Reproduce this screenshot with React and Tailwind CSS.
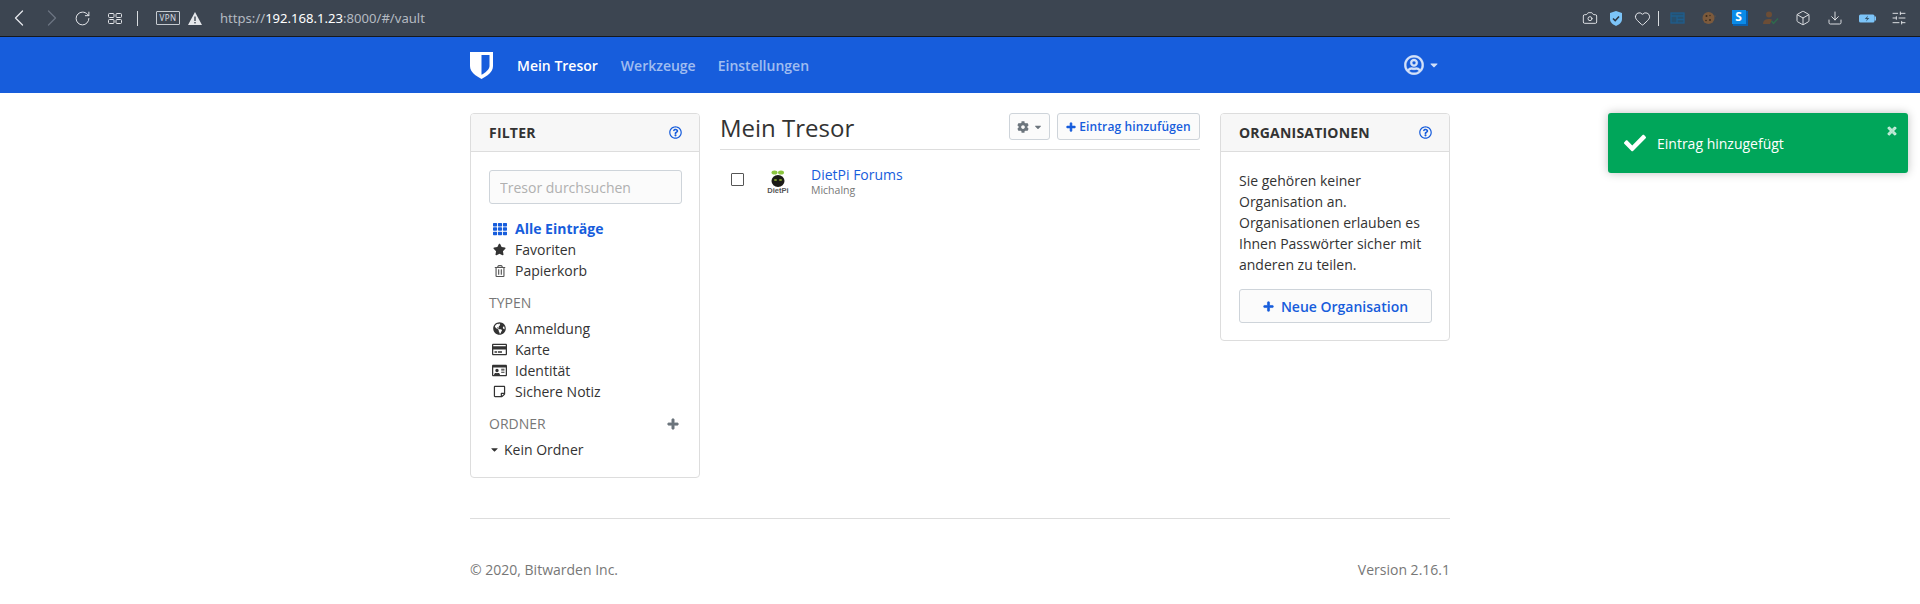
import React from 'react';
import { ChevronLeft, ChevronRight, RotateCw, Camera, Heart, Box, Download, SlidersHorizontal } from 'lucide-react';
import {
  FaTh, FaStar, FaRegTrashAlt, FaGlobeAmericas, FaRegCreditCard, FaRegIdCard, FaRegStickyNote,
  FaCaretDown, FaPlus, FaCog, FaRegQuestionCircle, FaRegUserCircle, FaCheck, FaTimes,
} from 'react-icons/fa';

const TilesIcon = () => (
  <svg width="14" height="11" viewBox="0 0 14 11" fill="none" stroke="#e5e7eb" strokeWidth="1">
    <rect x="0.5" y="0.5" width="5.5" height="4" rx="1" />
    <rect x="8" y="0.5" width="5.5" height="4" rx="1" />
    <rect x="0.5" y="6.5" width="5.5" height="4" rx="1" />
    <rect x="8" y="6.5" width="5.5" height="4" rx="1" />
  </svg>
);

const WarnIcon = () => (
  <svg width="14" height="13" viewBox="0 0 14 13">
    <path d="M7 0 L14 13 H0 Z" fill="#e5e7eb" />
    <rect x="6.3" y="4.5" width="1.4" height="4.5" fill="#3c4551" />
    <rect x="6.3" y="10" width="1.4" height="1.4" fill="#3c4551" />
  </svg>
);

const ShieldBadge = () => (
  <svg width="14" height="15" viewBox="0 0 14 15">
    <path d="M7 0 L13 2 V8 C13 12 9 14 7 15 C5 14 1 12 1 8 V2 Z" fill="#7cc4f8" />
    <path d="M4 7.5 L6.2 9.7 L10 5.5" fill="none" stroke="#2b3440" strokeWidth="1.6" />
  </svg>
);

const TableExt = () => (
  <svg width="15" height="12" viewBox="0 0 15 12" fill="none" stroke="#1f5d8c" strokeWidth="1.3">
    <rect x="1" y="1" width="13" height="10" fill="#27506f" />
    <path d="M1 4 H14 M7 4 V11 M7 7.5 H14" />
  </svg>
);

const CookieExt = () => (
  <svg width="14" height="14" viewBox="0 0 14 14">
    <circle cx="6.5" cy="7" r="6" fill="#7c5a3c" />
    <circle cx="4.5" cy="5" r="1" fill="#3a2a1c" />
    <circle cx="8" cy="9" r="1" fill="#3a2a1c" />
    <circle cx="4" cy="9.5" r="0.8" fill="#3a2a1c" />
    <circle cx="8" cy="4.5" r="0.7" fill="#3a2a1c" />
    <circle cx="13" cy="5" r="0.6" fill="#7c5a3c" />
  </svg>
);

const StylusExt = () => (
  <div className="relative w-[16px] h-[16px] mb-px">
    <div className="absolute left-[1px] top-[1px] w-[15px] h-[15px] bg-[#0b5fae]" />
    <div className="w-[14px] h-[14px] relative bg-[#0b8be8] text-white font-bold text-[12px] leading-[14px] text-center">S</div>
  </div>
);

const PersonExt = () => (
  <svg width="16" height="14" viewBox="0 0 16 14">
    <circle cx="6" cy="3.5" r="3" fill="#6b4d36" />
    <path d="M0 13 C0 9 3 8 6 8 C7.5 8 8.5 8.3 9 8.6 L7 13 Z" fill="#6b4d36" />
    <path d="M8.5 10 L10.5 12.5 L15 7.5" fill="none" stroke="#2f6b4c" strokeWidth="1.4" />
  </svg>
);

const BatteryExt = () => (
  <svg width="17" height="9" viewBox="0 0 17 9">
    <rect x="0" y="0.5" width="15.5" height="8" rx="1.5" fill="#7cc4f8" />
    <rect x="15.5" y="2.5" width="1.5" height="4" fill="#7cc4f8" />
    <path d="M9 1.5 L5.8 5 H8 L7 7.5 L10.4 4 H8.2 Z" fill="#37586f" />
  </svg>
);

const BrowserBar = () => (
  <div className="h-[37px] bg-[#3c4551] border-b border-[#16191d] flex items-center font-['Noto_Sans','Open_Sans',sans-serif] shrink-0">
    <ChevronLeft size={28} strokeWidth={1.1} className="ml-[5px] text-[#e5e7eb]" />
    <ChevronRight size={28} strokeWidth={1.1} className="ml-[5px] text-[#6b7480]" />
    <RotateCw size={17} strokeWidth={1.4} className="ml-[8px] text-[#e5e7eb]" />
    <div className="ml-[17px] flex"><TilesIcon /></div>
    <div className="ml-[15px] w-px h-[15px] bg-[#d8dce0]" />
    <div className="ml-[18px] w-[24px] h-[14px] border border-[#c6cbd1] rounded-[1px] text-[8px] leading-[12px] tracking-[0.5px] text-center text-[#d8dce0]">VPN</div>
    <div className="ml-[8px] flex"><WarnIcon /></div>
    <div className="ml-[18px] text-[13.1px] text-[#b4bac1]">
      https://<span className="text-white">192.168.1.23</span>:8000/#/vault
    </div>
    <div className="ml-auto mr-[5px] flex items-center text-[#e5e7eb]">
      <div className="w-[26px] flex justify-center"><Camera size={16} strokeWidth={1.4} /></div>
      <div className="w-[26px] flex justify-center"><ShieldBadge /></div>
      <div className="w-[26px] flex justify-center"><Heart size={17} strokeWidth={1.4} /></div>
      <div className="ml-[3px] mr-[3px] w-px h-[15px] bg-[#d8dce0]" />
      <div className="w-[31px] flex justify-center"><TableExt /></div>
      <div className="w-[31px] flex justify-center"><CookieExt /></div>
      <div className="w-[31px] flex justify-center"><StylusExt /></div>
      <div className="w-[32px] flex justify-center"><PersonExt /></div>
      <div className="w-[32px] flex justify-center"><Box size={16} strokeWidth={1.4} /></div>
      <div className="w-[32px] flex justify-center"><Download size={16} strokeWidth={1.4} /></div>
      <div className="w-[32px] flex justify-center"><BatteryExt /></div>
      <div className="w-[32px] flex justify-center"><SlidersHorizontal size={16} strokeWidth={1.4} /></div>
    </div>
  </div>
);

const Logo = () => (
  <svg width="23" height="28" viewBox="0 0 23 28">
    <path d="M0 1 H23 V15 C23 21 17 25 11.5 28 C6 25 0 21 0 15 Z" fill="#fff" />
    <path d="M11.5 4 H19.5 V15 C19.5 18.5 15.5 21.5 11.5 23.8 Z" fill="#175ddc" />
  </svg>
);

const NavBar = () => (
  <div className="h-[56px] bg-[#175ddc] shrink-0">
    <div className="w-[980px] mx-auto h-full flex items-center">
      <Logo />
      <span className="ml-[24px] text-white font-semibold">Mein Tresor</span>
      <span className="ml-[23px] text-white/60 font-semibold">Werkzeuge</span>
      <span className="ml-[22px] text-white/60 font-semibold">Einstellungen</span>
      <div className="ml-auto mr-[10px] flex items-center text-white/80">
        <FaRegUserCircle size={20} stroke="currentColor" strokeWidth={12} />
        <FaCaretDown size={12} className="ml-[4px]" />
      </div>
    </div>
  </div>
);

const CardHeader = ({ title }) => (
  <div className="h-[38px] bg-[#f7f7f7] border-b border-[#ddd] rounded-t-[3px] pl-[18px] pr-[17px] flex items-center justify-between">
    <span className="text-[14px] font-bold text-[#333] uppercase tracking-[0.2px]">{title}</span>
    <FaRegQuestionCircle size={13} className="text-[#175ddc]" />
  </div>
);

const FilterRow = ({ icon, label, active }) => (
  <li className={`h-[21px] flex items-center ${active ? 'text-[#175ddc] font-bold' : 'text-[#333]'}`}>
    <span className={`w-[17px] flex justify-center shrink-0 ${active ? 'text-[#175ddc]' : 'text-[#333]'}`}>{icon}</span>
    <span className="ml-[7px]">{label}</span>
  </li>
);

const FilterCard = () => (
  <div className="w-[230px] h-[365px] border border-[#ddd] rounded-[4px] shrink-0">
    <CardHeader title="Filter" />
    <div className="pl-[18px] pr-[17px] pt-[18px]">
      <input
        readOnly
        placeholder="Tresor durchsuchen"
        className="w-full h-[34px] px-[10px] bg-[#fbfbfb] border border-[#ced4da] rounded-[3px] text-[14px] placeholder:text-[#b0b0b0] outline-none"
      />
      <ul className="mt-[14px] ml-[2px]">
        <FilterRow active icon={<FaTh size={14} />} label="Alle Einträge" />
        <FilterRow icon={<FaStar size={13} />} label="Favoriten" />
        <FilterRow icon={<FaRegTrashAlt size={12} className="text-[#555]" />} label="Papierkorb" />
      </ul>
      <div className="mt-[11px] h-[21px] flex items-center text-[#777] uppercase">Typen</div>
      <ul className="mt-[5px] ml-[2px]">
        <FilterRow icon={<FaGlobeAmericas size={13} />} label="Anmeldung" />
        <FilterRow icon={<FaRegCreditCard size={15} />} label="Karte" />
        <FilterRow icon={<FaRegIdCard size={15} />} label="Identität" />
        <FilterRow icon={<FaRegStickyNote size={13} />} label="Sichere Notiz" />
      </ul>
      <div className="mt-[11px] h-[21px] flex items-center justify-between text-[#777] uppercase">
        Ordner
        <FaPlus size={12} stroke="currentColor" strokeWidth={30} className="mr-[3px] text-[#6c757d]" />
      </div>
      <div className="mt-[5px] h-[21px] flex items-center text-[#333]">
        <FaCaretDown size={11} className="mr-[4px]" />
        Kein Ordner
      </div>
    </div>
  </div>
);

const DietPiIcon = () => (
  <svg width="24" height="26" viewBox="0 0 24 26">
    <ellipse cx="8.5" cy="4.5" rx="3" ry="2" fill="#8bc53f" />
    <ellipse cx="15" cy="4.5" rx="3" ry="2" fill="#8bc53f" />
    <ellipse cx="12" cy="13" rx="6.5" ry="6" fill="#1b1b17" />
    <ellipse cx="9.5" cy="12" rx="1.6" ry="1" fill="#7f9a2e" />
    <ellipse cx="14.5" cy="12" rx="1.6" ry="1" fill="#7f9a2e" />
    <text x="12" y="25" textAnchor="middle" fontSize="7.5" fontWeight="700" fontFamily="'Liberation Sans', sans-serif" fill="#555">DietPi</text>
  </svg>
);

const VaultMain = () => (
  <div className="w-[480px] shrink-0">
    <div className="h-[37px] border-b border-[#ddd] flex items-start justify-between">
      <h1 className="text-[24px] leading-[30px] text-[#333]">Mein Tresor</h1>
      <div className="flex gap-[7px]">
        <button className="w-[41px] h-[27px] bg-[#fbfbfb] border border-[#ced4da] rounded-[3px] flex items-center justify-center text-[#6c757d]">
          <FaCog size={12} />
          <FaCaretDown size={10} className="ml-[4px]" />
        </button>
        <button className="w-[143px] h-[27px] bg-[#fbfbfb] border border-[#ced4da] rounded-[3px] flex items-center justify-center text-[#175ddc] text-[12px] font-semibold tracking-[0.12px]">
          <FaPlus size={10} stroke="currentColor" strokeWidth={30} className="mr-[3px]" />
          Eintrag hinzufügen
        </button>
      </div>
    </div>
    <div className="mt-[15px] flex items-center">
      <div className="ml-[11px] mb-[2px] w-[13px] h-[13px] border border-[#555] bg-white rounded-[1px]" />
      <div className="ml-[22px] flex"><DietPiIcon /></div>
      <div className="ml-[21px] leading-[15px]">
        <div className="text-[14px] leading-[19px] text-[#175ddc]">DietPi Forums</div>
        <div className="text-[10.5px] leading-[12px] text-[#777]">Michalng</div>
      </div>
    </div>
  </div>
);

const OrgCard = () => (
  <div className="w-[230px] h-[228px] border border-[#ddd] rounded-[4px] shrink-0">
    <CardHeader title="Organisationen" />
    <div className="pl-[18px] pr-[17px] pt-[18px]">
      <p className="text-[#333] leading-[21px]">
        Sie gehören keiner Organisation an. Organisationen erlauben es Ihnen Passwörter sicher mit anderen zu teilen.
      </p>
      <button className="mt-[14px] w-full h-[34px] bg-[#fbfbfb] border border-[#ced4da] rounded-[3px] flex items-center justify-center text-[#175ddc] font-semibold">
        <FaPlus size={11} stroke="currentColor" strokeWidth={30} className="mr-[7px]" />
        Neue Organisation
      </button>
    </div>
  </div>
);

const Toast = () => (
  <div className="absolute left-[1608px] top-[113px] w-[300px] h-[60px] bg-[#00a65a] rounded-[3px] shadow-[0_0_10px_rgba(0,0,0,0.25)] text-white flex items-center">
    <FaCheck size={22} className="ml-[16px]" />
    <span className="ml-[11px] text-[14px]">Eintrag hinzugefügt</span>
    <FaTimes size={12} stroke="currentColor" strokeWidth={40} className="absolute right-[10px] top-[12px] text-white/70" />
  </div>
);

export default function App() {
  return (
    <div className="relative h-[604px] overflow-hidden bg-white flex flex-col text-[14px] leading-[21px] font-['Open_Sans',sans-serif]">
      <BrowserBar />
      <NavBar />
      <div className="w-[980px] mx-auto mt-[20px] flex gap-[20px] h-[365px]">
        <FilterCard />
        <VaultMain />
        <OrgCard />
      </div>
      <div className="w-[980px] mx-auto mt-[40px] pt-[40px] border-t border-[#ddd] flex justify-between text-[#777]">
        <span>© 2020, Bitwarden Inc.</span>
        <span>Version 2.16.1</span>
      </div>
      <Toast />
    </div>
  );
}
